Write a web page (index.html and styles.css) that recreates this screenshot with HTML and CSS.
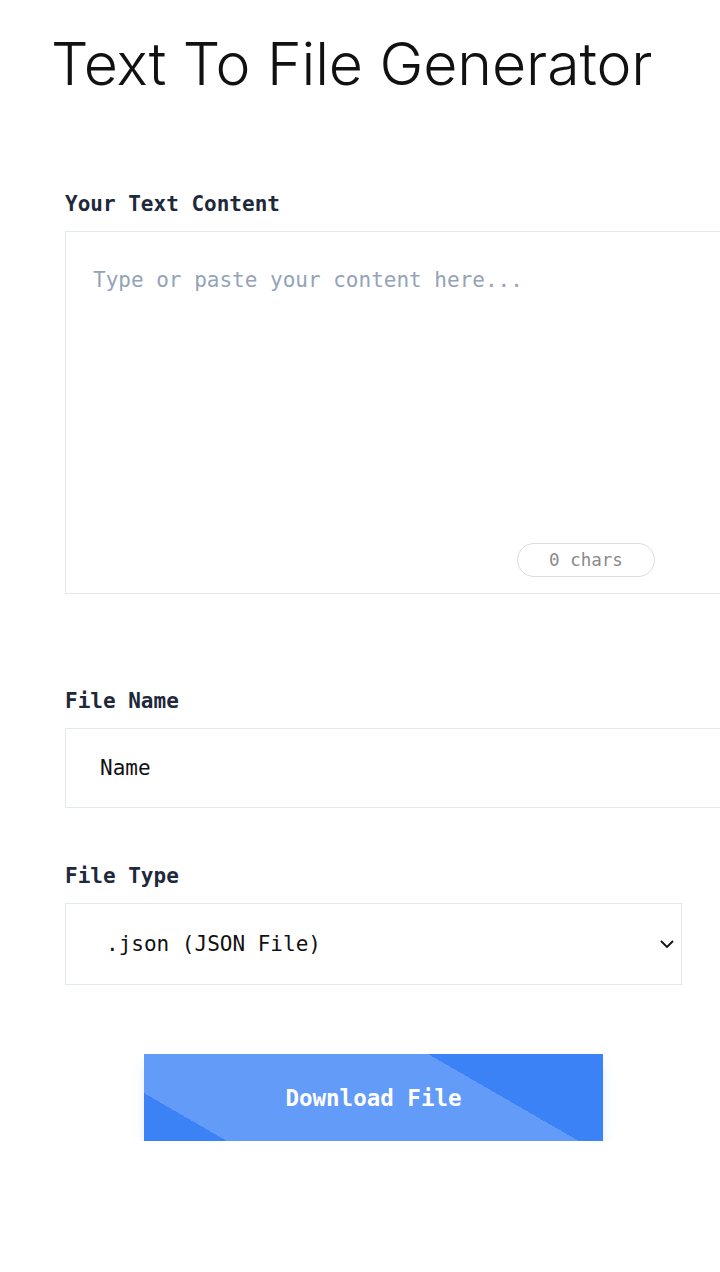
FILE: index.html
```html
<!DOCTYPE html>
<html lang="en">
<head>
<meta charset="utf-8">
<title>Text To File Generator</title>
<link rel="stylesheet" href="styles.css">
</head>
<body>
<main class="page">
  <h1 class="title">Text To File Generator</h1>
  <form class="form">
    <div class="field field-text">
      <label class="label" for="content">Your Text Content</label>
      <div class="area-wrap">
        <textarea id="content" class="area" placeholder="Type or paste your content here..."></textarea>
        <span class="chars">0 chars</span>
      </div>
    </div>
    <div class="field field-name">
      <label class="label" for="fname">File Name</label>
      <input id="fname" class="input" type="text" value="Name">
    </div>
    <div class="field field-type">
      <label class="label" for="ftype">File Type</label>
      <div class="select">
        <span class="select-value">.json (JSON File)</span>
        <svg class="chevron" width="16" height="10" viewBox="0 0 16 10"><path d="M2 2 L8 8 L14 2" fill="none" stroke="#111" stroke-width="1.8"/></svg>
      </div>
    </div>
    <div class="actions">
      <button type="button" class="btn">Download File</button>
    </div>
  </form>
</main>
</body>
</html>
```

FILE: styles.css
```css
html, body { margin: 0; padding: 0; background: #fff; }
body { overflow-x: hidden; }
.page { padding: 0; }
.title {
  font-family: Inter, "Noto Sans", sans-serif;
  font-weight: 300;
  font-size: 59px;
  line-height: 70px;
  letter-spacing: -0.1px;
  color: #111;
  margin: 29px 0 0 51px;
}
.form {
  width: 617px;
  margin: 0 0 0 65px;
  font-family: "DejaVu Sans Mono", monospace;
}
.field-text { margin-top: 91px; }
.label {
  display: block;
  font-weight: bold;
  font-size: 21px;
  line-height: 28px;
  color: #1e293b;
  margin-bottom: 13px;
}
.area-wrap { position: relative; width: 700px; }
.area {
  display: block;
  box-sizing: border-box;
  width: 700px;
  height: 363px;
  border: 1px solid #e2e8f0;
  border-radius: 0;
  padding: 34px 27px;
  font-family: "DejaVu Sans Mono", monospace;
  font-size: 21px;
  line-height: 28px;
  resize: none;
  outline: none;
  color: #111;
}
.area::placeholder { color: #94a3b8; }
.chars {
  position: absolute;
  left: 452px;
  top: 312px;
  box-sizing: border-box;
  width: 138px;
  height: 34px;
  border: 1px solid #dcdcdc;
  border-radius: 17px;
  font-size: 17.5px;
  line-height: 32px;
  text-align: center;
  color: #8a8a8a;
}
.field-name { margin-top: 93px; }
.input {
  display: block;
  box-sizing: border-box;
  width: 700px;
  height: 80px;
  border: 1px solid #e2e8f0;
  border-radius: 0;
  padding: 0 34px;
  font-family: "DejaVu Sans Mono", monospace;
  font-size: 21px;
  color: #111;
  outline: none;
}
.field-type { margin-top: 54px; }
.select {
  box-sizing: border-box;
  width: 617px;
  height: 82px;
  border: 1px solid #e2e8f0;
  display: flex;
  align-items: center;
  justify-content: space-between;
  padding: 0 6px 0 40px;
  font-size: 21px;
  color: #111;
}
.chevron { margin-right: 0; }
.actions {
  display: flex;
  justify-content: center;
  margin-top: 69px;
}
.btn {
  width: 459px;
  height: 87px;
  border: 0;
  border-radius: 0;
  background: linear-gradient(30deg, #3b82f6 13.6%, #629bf8 13.6%, #629bf8 71.3%, #3b82f6 71.3%);
  box-shadow: 0 8px 14px -3px rgba(59, 130, 246, 0.22);
  color: #fff;
  font-family: "DejaVu Sans Mono", monospace;
  font-weight: bold;
  font-size: 22.5px;
  cursor: pointer;
}
```
